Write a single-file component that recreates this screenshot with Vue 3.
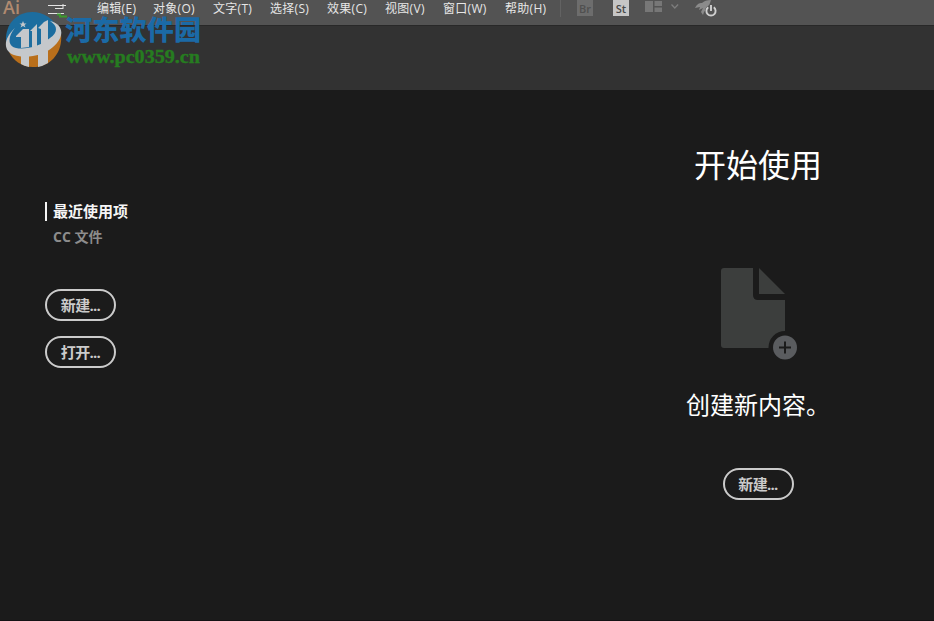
<template>
  <div class="app">
    <header class="menubar">
      <span class="ai">Ai</span>
      <svg class="file-mark" width="24" height="20" viewBox="0 0 24 20">
        <path d="M3 5.500h18M10 8.500h8M3 13.500h16" stroke="#e4e4e4" stroke-width="1.200" />
        <path d="M18 4v5" stroke="#e4e4e4" />
        <path d="M12 14.500h3v2h7" stroke="#3b9a2d" stroke-width="2" fill="none" />
      </svg>
      <nav class="menus">
        <span v-for="m in menus" :key="m">{{ m }}</span>
      </nav>
      <i class="divider"></i>
      <span class="chip br">Br</span>
      <span class="chip st">St</span>
      <svg class="arrange" width="36" height="16" viewBox="0 0 36 16">
        <path d="M0 1h8v11H0zM9.500 1H17v5H9.500zM9.500 7.500H17V12H9.500z" fill="#777" />
        <path d="M26.500 4.500l3.300 3.500 3.300-3.500" stroke="#7d7d7d" stroke-width="1.300" fill="none" />
      </svg>
      <svg class="gpu" width="24" height="20" viewBox="0 0 24 20">
        <path d="M1 8C3 4 5 3 8 3C10 1 13 0 17 0C16 4 14 8 10 12L9 15L7 12L9 8L5 10L6 7Z" fill="#8b8b8b" />
        <circle cx="17" cy="11" r="6" fill="#535353" />
        <path d="M14.200 7.300a4.600 4.600 0 1 0 5.600 0M17 5v6" stroke="#d0d0d0" stroke-width="1.900" fill="none" />
      </svg>
    </header>
    <div class="controlbar"></div>

    <main class="workspace">
      <aside class="side">
        <div class="tab active">最近使用项</div>
        <div class="tab">CC 文件</div>
        <button class="pill">新建...</button>
        <button class="pill">打开...</button>
      </aside>
      <section class="start">
        <h1>开始使用</h1>
        <svg class="doc" width="78" height="94" viewBox="0 0 78 94">
          <path d="M3 0H32V27Q32 32 37 32H64V63A16.500 16.500 0 0 0 47.500 80H3Q0 80 0 77V3Q0 0 3 0Z" fill="#3c3e3d" />
          <path d="M38 0L64 26H38Z" fill="#3c3e3d" />
          <circle cx="64" cy="79.500" r="12" fill="#5a5c5f" />
          <path d="M58 79.500h12M64 73.500v12" stroke="#1b1b1b" stroke-width="2" />
        </svg>
        <h2>创建新内容。</h2>
        <button class="pill">新建...</button>
      </section>
    </main>

    <!-- 左上角站点水印 -->
    <div class="watermark">
      <svg width="58" height="58" viewBox="0 0 58 58">
        <path d="M2 30C1 12 14 1 28 1C40 1 50 8 54 18L46 32L20 41L4 38Z" fill="#1c6d9f" />
        <path d="M57 23C59 41 47 56 29 56C17 56 9 49 5 41C24 47 46 39 57 23Z" fill="#b96f1b" />
        <path d="M11 17C-1 28 -1 40 10 44C22 48 39 45 49 36C61 26 60 13 46 10C54 15 54 21 46 27C37 35 22 39 12 37C3 35 4 25 11 17Z" fill="#c5c8cb" />
        <path d="M12 25l7-7h6v18l-8 1V26h-5zM26 20l7-7v22l-5 2V20zM34 17l6-6 4-2v21l-7 5V18z" fill="#c5c8cb" />
        <path d="M17 45h8v11q-5-1-8-3zM34 43l10-4v13q-5 3-10 4z" fill="#c5c8cb" />
        <path d="M19 10l1 2.500 2.500 0-2 1.500 1 2.500-2.500-1.500-2.500 1.500 1-2.500-2-1.500 2.500 0z" fill="#c5c8cb" />
      </svg>
      <svg class="mark-text" width="144" height="58" viewBox="0 0 144 58">
        <text class="site" x="1" y="29" textLength="136">河东软件园</text>
        <text class="url" x="3" y="52" textLength="133" lengthAdjust="spacingAndGlyphs">www.pc0359.cn</text>
      </svg>
    </div>
  </div>
</template>

<script setup>
const menus = [
  "编辑(E)",
  "对象(O)",
  "文字(T)",
  "选择(S)",
  "效果(C)",
  "视图(V)",
  "窗口(W)",
  "帮助(H)",
];
</script>

<style>
body {
  background: #1b1b1b;
}
</style>

<style scoped>
.app {
  position: relative;
  width: 934px;
  height: 621px;
  overflow: hidden;
  box-sizing: border-box;
  background: #1b1b1b;
  border-bottom: 1px solid #141214;
  font-family: "Open Sans", "Noto Sans CJK SC", sans-serif;
}

.menubar {
  display: flex;
  align-items: flex-start;
  height: 25px;
  background: #535353;
}

.ai {
  width: 45px;
  padding-left: 3px;
  box-sizing: border-box;
  color: #b08a70;
  font: 600 18px/15px "Open Sans", sans-serif;
}

.file-mark {
  width: 24px;
  margin-right: 28px;
}

.menus {
  display: grid;
  grid-template-columns: 56px 60px 57px 57px 58px 58px 62px 55px;
  color: #e6e6e6;
  font-size: 12px;
  letter-spacing: 0.3px;
  line-height: 18px;
  white-space: nowrap;
}

.divider {
  width: 1px;
  height: 17px;
  margin-right: 16px;
  background: #626262;
}

.chip {
  width: 16px;
  height: 16px;
  margin-right: 20px;
  font: 600 11px/17px "Open Sans", sans-serif;
  text-align: center;
}

.br {
  background: #6d6d6d;
  color: #505050;
}

.st {
  margin-right: 16px;
  background: #c6c6c6;
  color: #484848;
}

.arrange {
  margin-right: 13px;
}

.controlbar {
  height: 65px;
  box-sizing: border-box;
  border-top: 1px solid #282828;
  background: #323232;
}

.workspace {
  display: flex;
  justify-content: space-between;
}

.side {
  display: flex;
  flex-direction: column;
  align-items: flex-start;
  padding: 112px 0 0 45px;
}

.tab {
  height: 19px;
  padding-left: 6px;
  margin-bottom: 6px;
  border-left: 2px solid transparent;
  color: #8c8c8c;
  font-size: 14px;
  font-weight: bold;
  line-height: 19px;
}

.tab.active {
  color: #f5f5f5;
  border-color: #f5f5f5;
  font-size: 15px;
}

.pill {
  width: 71px;
  height: 32px;
  padding: 0;
  border: 2px solid #cbcbcb;
  border-radius: 16px;
  background: transparent;
  color: #cbcbcb;
  font: bold 15px/26px "Open Sans", "Noto Sans CJK SC", sans-serif;
  letter-spacing: -0.7px;
}

.side .pill {
  margin-bottom: 15px;
}

.side .tab + .pill {
  margin-top: 37px;
}

.start {
  display: flex;
  flex-direction: column;
  align-items: center;
  width: 352px;
  padding-top: 51px;
}

h1,
h2 {
  margin: 0;
  color: #fff;
  font-weight: 400;
}

h1 {
  font-size: 32px;
  line-height: 48px;
}

.doc {
  margin: 79px 0 25px 4px;
}

h2 {
  font-size: 24px;
  line-height: 36px;
}

.start .pill {
  margin-top: 45px;
}

.watermark {
  position: absolute;
  top: 11px;
  left: 4px;
  display: flex;
}

.mark-text {
  margin-left: 2px;
}

.site {
  fill: #1b6aa6;
  font: 900 27px "Noto Sans CJK SC", sans-serif;
}

.url {
  fill: #267c20;
  stroke: #267c20;
  stroke-width: 0.4;
  font: bold 18px "Liberation Serif", serif;
}
</style>
